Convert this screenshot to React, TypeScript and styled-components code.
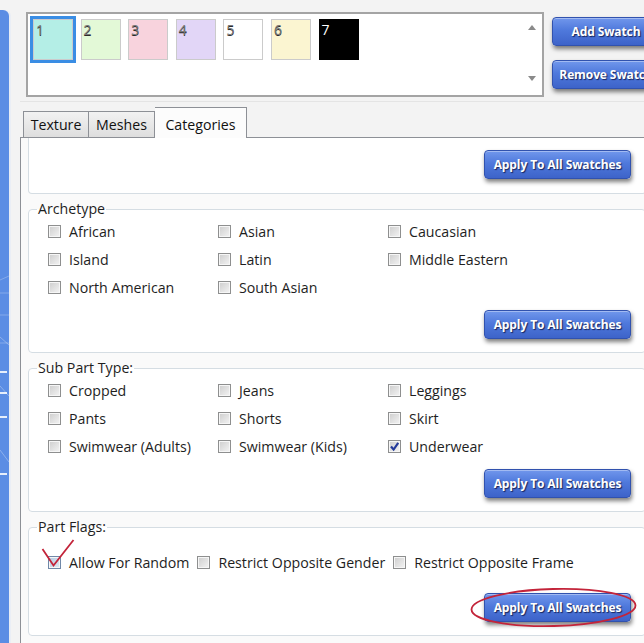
import styled, { createGlobalStyle } from 'styled-components';

const GlobalStyle = createGlobalStyle`
  html, body {
    margin: 0;
    padding: 0;
    overflow: hidden;
    background: #f3f3f3;
  }
`;

const swatches = [
  { n: 1, color: '#b4eee6' },
  { n: 2, color: '#e3f9d7' },
  { n: 3, color: '#f8d3dd' },
  { n: 4, color: '#e2d6f7' },
  { n: 5, color: '#ffffff' },
  { n: 6, color: '#fbf5d1' },
  { n: 7, color: '#000000' },
];

const archetypes = [
  'African', 'Asian', 'Caucasian',
  'Island', 'Latin', 'Middle Eastern',
  'North American', 'South Asian',
];

const subParts = [
  { label: 'Cropped' }, { label: 'Jeans' }, { label: 'Leggings' },
  { label: 'Pants' }, { label: 'Shorts' }, { label: 'Skirt' },
  { label: 'Swimwear (Adults)' }, { label: 'Swimwear (Kids)' }, { label: 'Underwear', checked: true },
];

const flags = ['Allow For Random', 'Restrict Opposite Gender', 'Restrict Opposite Frame'];

const App = () => {
  return (
    <>
      <GlobalStyle />
      <Window>
        <SideStrip>
          <svg width="9" height="633" viewBox="0 0 9 633">
            <line x1="0" y1="283" x2="9" y2="283" stroke="#fff" strokeOpacity="0.25" />
            <line x1="0" y1="305" x2="9" y2="305" stroke="#fff" strokeOpacity="0.25" />
            <line x1="0" y1="333" x2="9" y2="333" stroke="#fff" strokeOpacity="0.25" />
            <line x1="0" y1="270" x2="9" y2="266" stroke="#fff" strokeOpacity="0.25" />
            <line x1="0" y1="327" x2="9" y2="335" stroke="#fff" strokeOpacity="0.3" />
            <line x1="0" y1="376" x2="9" y2="386" stroke="#fff" strokeOpacity="0.3" />
            <line x1="0" y1="440" x2="9" y2="452" stroke="#fff" strokeOpacity="0.3" />
            <rect x="0" y="361" width="7" height="2" fill="#fff" fillOpacity="0.85" />
            <rect x="0" y="382" width="7" height="2" fill="#fff" fillOpacity="0.85" />
            <rect x="0" y="406" width="7" height="2" fill="#fff" fillOpacity="0.85" />
            <rect x="0" y="463" width="7" height="2" fill="#fff" fillOpacity="0.85" />
          </svg>
        </SideStrip>

        <Main>
          <TopBar>
            <SwatchList>
              <SwatchRow>
                {swatches.map(s => (
                  <Swatch key={s.n} $color={s.color} $selected={s.n === 1} $dark={s.color === '#000000'}>
                    {s.n}
                  </Swatch>
                ))}
              </SwatchRow>
              <ScrollBar>
                <svg width="8" height="5" viewBox="0 0 8 5"><path d="M0 5 L4 0 L8 5 Z" fill="#8a8a8a" /></svg>
                <svg width="8" height="5" viewBox="0 0 8 5"><path d="M0 0 L4 5 L8 0 Z" fill="#8a8a8a" /></svg>
              </ScrollBar>
            </SwatchList>
            <SideButtons>
              <BlueButton $width={108}>Add Swatch</BlueButton>
              <BlueButton $width={108}>Remove Swatch</BlueButton>
            </SideButtons>
          </TopBar>

          <TabStrip>
            <Tab $width={66}>Texture</Tab>
            <Tab $width={66}>Meshes</Tab>
            <Tab $width={92} $active>Categories</Tab>
          </TabStrip>

          <Panel>
            <ClippedGroup>
              <ApplyRow $top={0}>
                <BlueButton>Apply To All Swatches</BlueButton>
              </ApplyRow>
            </ClippedGroup>

            <Group>
              <Legend>Archetype</Legend>
              <OptionGrid>
                {archetypes.map(a => (
                  <Option key={a}>
                    <Check />
                    <span>{a}</span>
                  </Option>
                ))}
              </OptionGrid>
              <ApplyRow $top={9}>
                <BlueButton>Apply To All Swatches</BlueButton>
              </ApplyRow>
            </Group>

            <Group>
              <Legend>Sub Part Type:</Legend>
              <OptionGrid>
                {subParts.map(p => (
                  <Option key={p.label}>
                    <Check>
                      {p.checked && (
                        <svg width="11" height="11" viewBox="0 0 11 11">
                          <path d="M2 5.5 L4.6 8.5 L9.2 1.8" fill="none" stroke="#233a9a" strokeWidth="2.2" />
                        </svg>
                      )}
                    </Check>
                    <span>{p.label}</span>
                  </Option>
                ))}
              </OptionGrid>
              <ApplyRow $top={9}>
                <BlueButton>Apply To All Swatches</BlueButton>
              </ApplyRow>
            </Group>

            <Group>
              <Legend>Part Flags:</Legend>
              <FlagRow>
                {flags.map((f, i) => (
                  <Option key={f}>
                    <Check $hover={i === 0} />
                    <span>{f}</span>
                  </Option>
                ))}
              </FlagRow>
              <ApplyRow $top={17}>
                <BlueButton>Apply To All Swatches</BlueButton>
              </ApplyRow>
            </Group>
          </Panel>
        </Main>

        {/* red annotations drawn over the screenshot */}
        <Annotations width="644" height="643" viewBox="0 0 644 643">
          <path d="M42.5 549 L53.5 565.5 L73.5 540" fill="none" stroke="#c3243a" strokeWidth="1.8" />
          <ellipse cx="553.5" cy="607.5" rx="82" ry="18.5" fill="none" stroke="#c3243a" strokeWidth="1.8" transform="rotate(-1.5 553.5 607.5)" />
        </Annotations>
      </Window>
    </>
  );
};

export default App;

const Window = styled.div`
  position: relative;
  display: flex;
  width: 680px;
  height: 643px;
  font-family: 'Open Sans', 'Noto Sans', sans-serif;
  color: #1e1e1e;
`;

const SideStrip = styled.div`
  width: 9px;
  height: 633px;
  margin-top: 10px;
  background: #5b8de4;
  border-top-right-radius: 6px;
  box-shadow: 1px 0 0 #e6ecf6, 2px 0 0 #eaeef5;
  svg { display: block; }
`;

const Main = styled.div`
  display: flex;
  flex-direction: column;
  width: 640px;
  margin-left: 11px;
`;

const TopBar = styled.div`
  display: flex;
  align-items: flex-start;
  height: 89px;
  padding: 12px 0 0 6px;
  border-bottom: 1px solid #e4e4e4;
`;

const SwatchList = styled.div`
  display: flex;
  width: 516px;
  height: 81px;
  border: 2px solid #a4a4a4;
  background: #fff;
`;

const SwatchRow = styled.div`
  flex: 1;
  display: flex;
  align-items: flex-start;
  gap: 7.6px;
  padding: 5px 0 0 5px;
`;

const Swatch = styled.div<{ $color: string; $selected?: boolean; $dark?: boolean }>`
  box-sizing: border-box;
  width: 40px;
  height: 41px;
  padding: 2px 0 0 2px;
  background: ${p => p.$color};
  border: 1px solid ${p => (p.$dark ? '#000' : '#cbcbcb')};
  outline: ${p => (p.$selected ? '3px solid #3a8de4' : 'none')};
  font-size: 14px;
  line-height: 16px;
  color: ${p => (p.$dark ? '#fff' : '#7a7a7a')};
  text-shadow: ${p => (p.$dark ? 'none' : '0 1px 0 #2a2a2a')};
`;

const ScrollBar = styled.div`
  width: 20px;
  display: flex;
  flex-direction: column;
  align-items: center;
  justify-content: space-between;
  padding: 11px 0 14px;
  svg { display: block; }
`;

const SideButtons = styled.div`
  display: flex;
  flex-direction: column;
  gap: 14px;
  margin: 5px 0 0 8px;
`;

const BlueButton = styled.button<{ $width?: number }>`
  box-sizing: border-box;
  width: ${p => (p.$width ? `${p.$width}px` : '147px')};
  height: 29px;
  padding: 0;
  border: 1px solid #3152ae;
  border-radius: 4px;
  background: linear-gradient(#7197ec 0%, #4f79dc 45%, #3d63c9 100%);
  box-shadow: inset 0 1px 0 rgba(255, 255, 255, 0.35), 1px 3px 4px rgba(0, 0, 0, 0.5);
  color: #fff;
  font-family: 'Open Sans', 'Noto Sans', sans-serif;
  font-size: 12px;
  font-weight: 700;
  letter-spacing: -0.1px;
  white-space: nowrap;
  text-shadow: 1px 1px 1px #17245a;
`;

const TabStrip = styled.div`
  display: flex;
  align-items: flex-end;
  height: 35px;
  padding-left: 3px;
`;

const Tab = styled.div<{ $width: number; $active?: boolean }>`
  box-sizing: border-box;
  width: ${p => p.$width}px;
  height: ${p => (p.$active ? 31 : 26)}px;
  margin-bottom: ${p => (p.$active ? -1 : 0)}px;
  position: relative;
  z-index: ${p => (p.$active ? 1 : 0)};
  display: flex;
  align-items: center;
  justify-content: center;
  padding-top: ${p => (p.$active ? 2 : 0)}px;
  border: 1px solid #8d9096;
  border-bottom: none;
  border-left-width: ${p => (p.$active ? 0 : 1)}px;
  background: ${p => (p.$active ? '#fcfcfc' : 'linear-gradient(#f2f2f2, #dedede)')};
  font-size: 14.2px;
  color: #111;
  & + & { border-left: ${p => (p.$active ? 'none' : '1px solid #8d9096')}; }
`;

const Panel = styled.div`
  display: flex;
  flex-direction: column;
  gap: 7px;
  flex: 1;
  padding: 0 14px 0 7px;
  border-top: 1px solid #8d9096;
  border-left: 1px solid #8d9096;
  background: #fafafa;
`;

const ClippedGroup = styled.div`
  box-sizing: border-box;
  height: 56px;
  padding-top: 12px;
  border: 1px solid #d5dde3;
  border-top: none;
  border-radius: 0 0 4px 4px;
  background: #fff;
`;

const Group = styled.fieldset`
  margin: 0;
  padding: 0 0 13px;
  border: 1px solid #d5dde3;
  border-radius: 4px;
  background: #fff;
  min-width: 0;
`;

const Legend = styled.legend`
  margin-left: 8px;
  padding: 0 1px;
  font-size: 14.2px;
  line-height: 16px;
  color: #1e1e1e;
`;

const OptionGrid = styled.div`
  display: grid;
  grid-template-columns: repeat(3, 170px);
  grid-auto-rows: 28px;
  padding-left: 19px;
`;

const FlagRow = styled.div`
  display: flex;
  align-items: center;
  gap: 8px;
  height: 28px;
  padding: 13px 0 0 19px;
`;

const Option = styled.label`
  display: flex;
  align-items: center;
  gap: 8px;
  font-size: 14.2px;
  white-space: nowrap;
`;

const Check = styled.span<{ $hover?: boolean }>`
  box-sizing: border-box;
  width: 13px;
  height: 13px;
  display: flex;
  align-items: center;
  justify-content: center;
  border: 1px solid ${p => (p.$hover ? '#7088a8' : '#8e8f8f')};
  background: ${p =>
    p.$hover
      ? 'linear-gradient(135deg, #b5c9e0 0%, #dbe6f2 90%)'
      : 'linear-gradient(135deg, #cdcdcd 0%, #eeeeee 85%, #f6f6f6 100%)'};
  box-shadow: inset 0 0 0 1px #f6f6f6;
  svg { display: block; }
`;

const ApplyRow = styled.div<{ $top: number }>`
  display: flex;
  justify-content: flex-end;
  margin-top: ${p => p.$top}px;
  padding-right: 14px;
`;

const Annotations = styled.svg`
  position: absolute;
  left: 0;
  top: 0;
  pointer-events: none;
  overflow: visible;
`;
